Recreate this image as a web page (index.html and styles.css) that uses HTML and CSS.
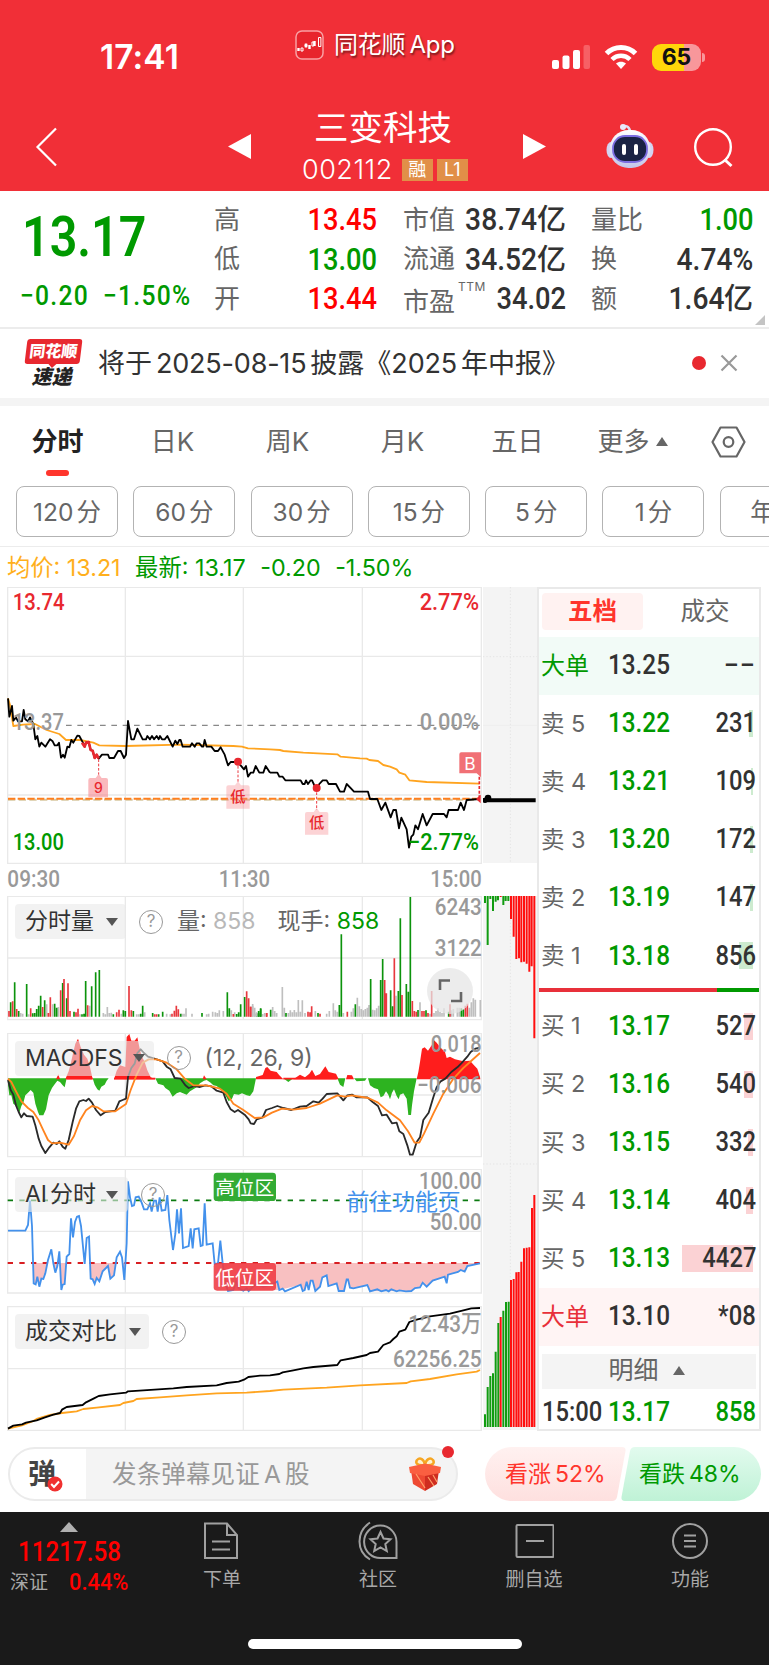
FILE: index.html
```html
<!DOCTYPE html>
<html lang="zh-CN">
<head>
    <meta charset="UTF-8">
    <meta name="viewport" content="width=device-width, initial-scale=1.0">
    <title>三变科技 002112</title>
    <link rel="stylesheet" href="styles.css">
</head>
<body>
    <header>
        <div class="status">
            <span class="clock">17:41</span>
            <div class="app-name">
                <svg width="29" height="30" viewBox="0 0 29 30">
                    <rect x="1" y="1" width="27" height="28" rx="6" fill="#e8242c" stroke="#f9a0a3" stroke-width="1.5"/>
                    <path d="M3.5 18v3M11 13.500v4M14.500 15v4M19.500 11v5" stroke="#fff" stroke-width="2.400"/>
                    <path d="M6 18h2v3H6zM10 14.500h2v2h-2zM17 12h1.800v4H17zM23.500 7.500h2.400v9h-2.400z" fill="none" stroke="#fff" stroke-width="1"/>
                </svg>
                <span>同花顺<i></i>App</span>
            </div>
            <div class="status-icons">
                <svg class="signal" width="40" height="26" viewBox="0 0 40 26">
                    <rect x="1" y="16" width="7" height="9" rx="2" fill="#fff"/>
                    <rect x="11.500" y="11.500" width="7" height="13.500" rx="2" fill="#fff"/>
                    <rect x="22" y="6" width="7" height="19" rx="2" fill="#fff"/>
                    <rect x="32.500" y="1" width="6.500" height="24" rx="2" fill="#f76065"/>
                </svg>
                <svg class="wifi" width="34" height="26" viewBox="0 0 34 26">
                    <path d="M2.500 9.500C10.500 1.500 23.500 1.500 31.500 9.500" fill="none" stroke="#fff" stroke-width="5"/>
                    <path d="M8 15.500c5-5 13-5 18 0" fill="none" stroke="#fff" stroke-width="4.500"/>
                    <path d="M17 25l-5-5.500c2.800-2.500 7.200-2.500 10 0z" fill="#fff"/>
                </svg>
                <div class="battery"><span>65</span></div>
            </div>
        </div>
        <div class="titlebar">
            <svg class="back" width="24" height="42" viewBox="0 0 24 42"><path d="M21 2.500L2.500 21 21 39.500" fill="none" stroke="#fff" stroke-width="2.200"/></svg>
            <svg class="prev" width="23" height="25" viewBox="0 0 23 25"><path d="M23 0v25L0 12.500z" fill="#fff"/></svg>
            <div class="stock">
                <h1>三变科技</h1>
                <p>002112 <b>融</b><b>L1</b></p>
            </div>
            <svg class="next" width="23" height="25" viewBox="0 0 23 25"><path d="M0 0v25l23-12.500z" fill="#fff"/></svg>
            <svg class="robot" width="48" height="46" viewBox="0 0 48 46">
                <defs>
                    <linearGradient id="shell" x1="0" y1="0" x2="0" y2="1"><stop offset="0" stop-color="#fff"/><stop offset="1" stop-color="#c3c5ea"/></linearGradient>
                </defs>
                <path d="M16 4c3-2 7-1 8 4" fill="none" stroke="#dfe0f5" stroke-width="2.500"/>
                <circle cx="17" cy="4" r="3" fill="#e9e9fa"/>
                <ellipse cx="5" cy="27" rx="4.500" ry="8" fill="#d3d4f1"/>
                <ellipse cx="43" cy="27" rx="4.500" ry="8" fill="#d3d4f1"/>
                <rect x="3.500" y="7" width="41" height="38" rx="19" fill="url(#shell)"/>
                <rect x="7" y="13" width="34" height="26" rx="12" fill="#1a2344" stroke="#7c6de0" stroke-width="1.800"/>
                <rect x="16" y="21" width="4" height="11" rx="2" fill="#fff"/>
                <rect x="28" y="21" width="4" height="11" rx="2" fill="#fff"/>
            </svg>
            <svg class="search" width="42" height="42" viewBox="0 0 42 42"><circle cx="20" cy="20" r="17.800" fill="none" stroke="#fff" stroke-width="2.400"/><path d="M31.500 32.500l7 6.500" stroke="#fff" stroke-width="3"/></svg>
        </div>
    </header>

    <section class="quote">
        <div class="last">
            <div class="price"><span class="din">13.17</span></div>
            <div class="change"><span class="din">−0.20</span><span class="din">−1.50%</span></div>
        </div>
        <dl class="q1">
            <div><dt>高</dt><dd class="din red">13.45</dd></div>
            <div><dt>低</dt><dd class="din green">13.00</dd></div>
            <div><dt>开</dt><dd class="din red">13.44</dd></div>
        </dl>
        <dl class="q2">
            <div><dt>市值</dt><dd><span class="din">38.74</span>亿</dd></div>
            <div><dt>流通</dt><dd><span class="din">34.52</span>亿</dd></div>
            <div><dt class="pe">市盈<sup>TTM</sup></dt><dd class="din">34.02</dd></div>
        </dl>
        <dl class="q3">
            <div><dt>量比</dt><dd class="din green">1.00</dd></div>
            <div><dt>换</dt><dd class="din">4.74%</dd></div>
            <div><dt>额</dt><dd><span class="din">1.64</span>亿</dd></div>
        </dl>
        <i class="corner"></i>
    </section>

    <section class="news">
        <div class="news-logo"><b>同花顺</b><em>速递</em></div>
        <p>将于<span>2025-08-15</span>披露《<span class="year">2025</span>年中报》</p>
        <i class="dot"></i>
        <svg class="close" width="18" height="18" viewBox="0 0 18 18"><path d="M1.500 1.500l15 15M16.500 1.500l-15 15" stroke="#999" stroke-width="2.200"/></svg>
    </section>

    <nav class="tabs">
        <a class="active">分时</a>
        <a>日K</a>
        <a>周K</a>
        <a>月K</a>
        <a>五日</a>
        <a>更多<i class="up"></i></a>
        <svg width="35" height="32" viewBox="0 0 35 32"><path d="M9.500 1.500h16L33.500 16l-8 14.500h-16L1.500 16z" fill="none" stroke="#666" stroke-width="2.200" stroke-linejoin="round"/><circle cx="17.500" cy="16" r="4.800" fill="none" stroke="#666" stroke-width="2.200"/></svg>
    </nav>
    <div class="periods">
        <a>120<i></i>分</a>
        <a>60<i></i>分</a>
        <a>30<i></i>分</a>
        <a>15<i></i>分</a>
        <a>5<i></i>分</a>
        <a>1<i></i>分</a>
        <a>年K</a>
    </div>

    <div class="legend"><span class="avg">均价: 13.21</span><span>最新: 13.17</span><span>-0.20</span><span>-1.50%</span></div>

    <main>
        <div class="charts">
            <!-- charts are drawn at 3 units per pixel -->
            <svg class="price-chart" width="476" height="278" viewBox="21 21 1428 834">
                <path class="grid" d="M23 22H1444V850H23ZM376 22V850M730 22V850M1087 22V850M23 229H1444M23 645H1444"/>
                <path d="M198 436H1444" stroke="#888" stroke-width="4" stroke-dasharray="17 17"/>
                <path d="M24 659H1440" stroke="#d8c7a0" stroke-width="6" stroke-dasharray="22 10"/>
                <path d="M24 656H1440" stroke="#fe7f1e" stroke-width="6" stroke-dasharray="22 7"/>
                <path class="line avg-line" d="M24 355L30 375 40 438 70 434 105 432 140 450 178 462 198 480 240 480 280 488 298 496 376 498 540 494 700 498 726 500 744 505 810 508 840 510 850 513 910 518 1012 523 1022 530 1080 535 1100 536 1108 540 1134 543 1150 555 1170 560 1190 568 1198 578 1216 584 1228 601 1280 606 1438 611"/>
                <polyline class="line" points="24,355 28,410 36,378 40,422 48,412 54,424 66,424 71,390 76,418 84,424 90,412 100,432 106,478 112,468 118,500 124,488 136,500 150,478 158,484 164,496 172,496 177,488 183,533 189,524 194,533 202,500 208,502 214,480 220,488 232,467 238,468 250,490 254,500 258,488 266,486 272,510 278,512 284,534 290,524 296,536 306,524 324,524 328,534 342,534 354,513 362,513 372,534 378,524 384,423 394,478 402,478 412,446 428,478 438,478 442,468 450,478 456,468 462,478 470,468 476,478 480,468 486,478 494,478 502,468 518,500 526,482 532,492 538,480 542,480 548,500 570,500 576,490 584,500 590,490 598,490 606,500 610,500 614,480 620,500 634,500 644,513 654,513 662,502 674,524 684,556 692,546 710,546 722,556 732,568 738,558 744,590 752,578 760,578 767,558 778,578 790,578 797,558 810,578"/>
                <polyline class="line red-line" points="246,488 254,500 258,488 266,486 272,510 278,512 284,534 290,524 296,536"/>
                <polyline class="line" transform="translate(750 0)" points="60,578 82,578 88,590 98,590 106,601 152,601 158,612 164,612 168,601 174,612 182,601 186,601 194,618 200,624 208,612 218,601 230,601 236,612 258,612 270,635 282,635 290,612 300,622 312,635 354,635 360,657 382,657 394,690 406,668 422,712 430,690 438,690 447,745 454,713 470,748 477,803 484,770 490,764 496,736 504,748 518,702 530,736 548,702 582,702 590,712 596,690 624,690 632,668 642,690 650,660 688,657"/>
                <path d="M296 538V584M714 545V610M950 624V690" stroke="#eb3a40" stroke-width="3" stroke-dasharray="8 5"/>
                <path d="M1438 590V657" stroke="#e8282f" stroke-width="5" stroke-dasharray="9 5"/>
                <circle cx="714" cy="545" r="12" fill="#e8282f"/>
                <circle cx="950" cy="624" r="12" fill="#e8282f"/>
                <path d="M1442 644V670L1428 657Z" fill="#e8282f"/>
                <path class="tag" d="M265 600a6 6 0 0 1 6-6H287L296 582 305 594H318a6 6 0 0 1 6 6V652H265Z"/>
                <path class="tag pale" d="M679 622a6 6 0 0 1 6-6H705L714 604 723 616H743a6 6 0 0 1 6 6V686H679Z"/>
                <path class="tag pale" d="M915 702a6 6 0 0 1 6-6H941L950 684 959 696H979a6 6 0 0 1 6 6V764H915Z"/>
                <path d="M1384 517H1443V592L1430 580H1378V523a6 6 0 0 1 6-6Z" fill="#f17075"/>
                <text class="tag-text" x="295" y="638" font-size="42">9</text>
                <text class="tag-text" x="714" y="665" font-size="46">低</text>
                <text class="tag-text" x="950" y="743" font-size="46">低</text>
                <text class="tag-b" x="1410" y="569">B</text>
                <text class="axis t-red" x="38" y="90" textLength="156" lengthAdjust="spacingAndGlyphs">13.74</text>
                <text class="axis" x="38" y="449" textLength="154" lengthAdjust="spacingAndGlyphs">13.37</text>
                <text class="axis t-green" x="38" y="810" textLength="154" lengthAdjust="spacingAndGlyphs">13.00</text>
                <text class="axis end t-red" x="1437" y="90" textLength="178" lengthAdjust="spacingAndGlyphs">2.77%</text>
                <text class="axis end" x="1437" y="449" textLength="178" lengthAdjust="spacingAndGlyphs">0.00%</text>
                <text class="axis end t-green" x="1437" y="810" textLength="213" lengthAdjust="spacingAndGlyphs">−2.77%</text>
            </svg>
            <svg width="476" height="31" viewBox="21 855 1428 93">
                <text class="axis" x="22" y="921" textLength="158" lengthAdjust="spacingAndGlyphs">09:30</text>
                <text class="axis mid" x="733" y="921" textLength="154" lengthAdjust="spacingAndGlyphs">11:30</text>
                <text class="axis end" x="1445" y="921" textLength="154" lengthAdjust="spacingAndGlyphs">15:00</text>
            </svg>

            <div class="panel">
                <svg width="476" height="126" viewBox="21 33 1428 378">
                    <path class="grid" d="M23 34H1444V404H23ZM376 34V404M730 34V404M1087 34V404M23 219H1444"/>
                    <path class="bars grey" d="M62 395V384M68 395V386M86 395V388M140 395V358M158 395V358M175 395V366M240 395V388M269 395V362M310 395V384M316 395V388M322 395V366M328 395V384M334 395V383M364 395V386M410 395V388M416 395V388M434 395V382M500 395V386M511 395V388M546 395V386M552 395V386M558 395V370M576 395V386M620 395V388M626 395V386M638 395V380M646 395V382M652 395V384M658 395V376M670 395V378M694 395V376M704 395V382M758 395V357M764 395V386M788 395V387"/>
                    <path class="bars green-bars" d="M32 395V352M44 395V292M56 395V378M80 395V297M98 395V385M104 395V384M110 395V372M116 395V362M122 395V332M134 395V346M164 395V356M170 395V368M188 395V294M200 395V340M222 395V380M246 395V388M252 395V386M257 395V288M275 395V304M287 395V262M298 395V255M340 395V388M370 395V376M376 395V378M400 395V378M422 395V386M428 395V362M458 395V384M476 395V388M488 395V380M542 395V386M606 395V384M682 395V322M688 395V370M710 395V387M716 395V382M722 395V358M734 395V336M770 395V385M776 395V378M782 395V371"/>
                    <path class="bars red-bars" d="M27 395V378M38 395V349M50 395V372M92 395V370M128 395V366M145 395V384M151 395V337M182 395V316M192 395V282M204 395V295M210 395V378M228 395V382M234 395V371M263 395V361M350 395V382M357 395V374M387 395V303M394 395V376M464 395V388M470 395V388M516 395V386M523 395V377M529 395V362M535 395V373M700 395V387M740 395V319M746 395V340M752 395V365M800 395V384"/>
                    <g transform="translate(750 0)">
                        <path class="bars grey" d="M8 395V362M14 395V368M20 395V382M44 395V384M68 395V366M74 395V378M80 395V384M97 395V306M103 395V368M115 395V384M121 395V376M127 395V382M133 395V375M139 395V382M145 395V345M151 395V380M157 395V346M165 395V384M196 395V378M230 395V386M238 395V378M250 395V355M256 395V376M262 395V380M280 395V384M304 395V380M310 395V370M322 395V338M328 395V364M334 395V372M340 395V376M346 395V372M352 395V368M357 395V360M368 395V374M374 395V376M380 395V370M386 395V362M438 395V332M510 395V352M540 395V386M552 395V384M558 395V378M564 395V370M570 395V380M576 395V384M582 395V370M604 395V376M610 395V372M622 395V368M628 395V368M658 395V368M664 395V352M670 395V340M676 395V344M691 395V345"/>
                        <path class="bars green-bars" d="M26 395V385M32 395V370M62 395V374M108 395V384M204 395V384M268 395V360M274 395V148M316 395V358M362 395V282M392 395V285M398 395V222M422 395V316M428 395V364M445 395V318M451 395V100M469 395V297M475 395V320M481 395V36M504 395V375M528 395V376M596 395V380M634 395V370M640 395V373"/>
                        <path class="bars red-bars" d="M2 395V365M50 395V384M174 395V380M180 395V382M185 395V364M210 395V386M292 395V380M404 395V285M409 395V325M433 395V220M456 395V330M487 395V348M493 395V378M499 395V380M516 395V378M522 395V378M534 395V384M545 395V318M600 395V358M646 395V362M652 395V356"/>
                    </g>
                    <text class="axis end" x="1445" y="90" textLength="141" lengthAdjust="spacingAndGlyphs">6243</text>
                    <text class="axis end" x="1445" y="214" textLength="141" lengthAdjust="spacingAndGlyphs">3122</text>
                </svg>
                <div class="tools"><span class="pick">分时量<i></i></span><i class="help">?</i><span class="info">量:&nbsp;<s>858</s></span><span class="info now">现手:&nbsp;<u>858</u></span></div>
                <div class="expand"><svg width="46" height="46" viewBox="0 0 46 46"><path d="M13 22V12.500H23M34 24V33H24" fill="none" stroke="#666" stroke-width="2.600"/></svg></div>
            </div>

            <div class="panel">
                <svg width="476" height="126" viewBox="21 443 1428 378">
                    <path class="grid" d="M23 444H1444V814H23ZM376 444V814M730 444V814M1087 444V814M23 629H1444"/>
                    <path fill="#2db320" d="M24 579V600L28 630H34L40 655 46 660 52 665 58 682 64 662 70 652 76 630 84 622 92 614 100 622 106 655 114 680 118 690H130L138 672 146 630 156 608 164 597 172 586 180 590 188 600 194 606 200 579ZM278 579L284 598 292 612 298 616 304 604 314 598 320 586 326 579ZM466 579L474 595 490 600 496 608 508 616 518 634 530 624 540 620 560 628 570 618 590 606 600 594 612 586 620 584 632 592 640 600 650 602 664 614 676 630 686 648 696 640 702 626 716 628 726 624 740 630 750 632 760 618 768 579ZM850 579L865 590 880 579ZM1012 579L1020 598 1030 605 1036 579ZM1062 579L1070 588 1095 586 1100 579ZM1104 579L1110 600 1122 608 1134 612 1142 636 1150 632 1158 618 1165 628 1170 642 1176 622 1182 612 1190 632 1196 642 1200 628 1210 624 1220 640 1225 689H1233L1236 660 1242 618 1250 579Z"/>
                    <path fill="#ff1d1c" d="M168 582L175 567 180 582ZM196 582L206 558 212 535 220 500 226 475 234 460 242 485 252 508 262 520 270 545 278 582ZM342 582L350 556 360 540 376 545 380 455 388 446 394 466 404 466 412 456 418 485 424 510 434 530 442 555 452 576 466 582ZM608 582L612 570 620 582ZM768 582V575L788 569 796 548 802 545 812 556 830 560 838 570 850 582ZM880 582L900 568 915 576 928 565 936 553 946 572 960 566 976 543 986 560 1008 565 1016 582ZM1038 582L1042 569 1056 570 1062 582ZM1250 582L1255 560 1260 530 1266 490 1274 486 1284 496 1295 480 1302 465 1310 472 1320 485 1335 500 1340 518 1350 514 1365 522 1390 528 1410 526 1422 540 1432 550 1440 575 1441 582Z"/>
                    <path d="M200 580H278M342 580H466M850 580H1010" stroke="#ff1d1c" stroke-width="5"/>
                    <path class="line dark" d="M24 584L32 614 40 628 48 660 56 680 64 696 72 684 80 692 98 694 106 720 116 760 124 782 136 803 148 786 160 772 170 776 178 768 188 784 196 790 206 764 218 710 228 670 238 648 250 644 258 647 266 640 276 652 288 674 302 690 316 680 346 676 358 648 368 644 378 640 384 575 394 548 404 535 412 503 422 492 432 503 444 514 470 522 488 528 500 544 512 552 524 578 542 580 556 600 566 608 584 602 600 605 616 600 634 603 650 616 670 622 680 650 692 672 704 680 714 674 734 688 746 702 752 714 762 716 770 702 788 696 798 674 816 668 832 662 850 668 874 674 900 664 920 662 940 648 956 652 968 640 980 626 1012 624 1030 645 1042 630 1056 628 1070 636 1102 636 1118 650 1134 662 1146 690 1160 688 1176 714 1190 712 1198 738 1210 746 1222 780 1230 808 1238 808 1250 770 1260 756 1270 704 1286 682 1300 636 1310 606 1322 588 1336 580 1354 560 1372 546 1384 534 1402 514 1412 500 1426 490 1440 487"/>
                    <path class="line orange-line" d="M24 580L34 590 46 614 64 648 84 668 100 680 116 705 130 735 144 764 156 774 180 772 206 778 222 752 240 705 258 675 276 662 292 666 310 678 346 678 378 656 392 614 410 568 428 532 446 522 470 522 500 532 530 552 556 582 580 600 620 600 660 610 680 625 700 655 730 674 764 698 790 696 816 682 846 670 880 673 920 668 960 655 1012 630 1035 634 1055 630 1105 638 1134 652 1160 675 1200 705 1224 738 1244 772 1258 772 1272 745 1300 685 1330 625 1360 580 1390 548 1440 503"/>
                    <text class="axis end" x="1445" y="500" textLength="153" lengthAdjust="spacingAndGlyphs">0.018</text>
                    <text class="axis end" x="1445" y="623" textLength="194" lengthAdjust="spacingAndGlyphs">−0.006</text>
                </svg>
                <div class="tools"><span class="pick en">MACDFS<i></i></span><i class="help">?</i><span class="info">(12, 26, 9)</span></div>
            </div>

            <div class="panel">
                <svg width="476" height="126" viewBox="21 27 1428 378">
                    <defs>
                        <clipPath id="low"><rect x="20" y="309" width="1424" height="88"/></clipPath>
                        <path id="ai" d="M24 212L76 212 84 195 90 122 96 198 101 370 107 373 112 350 118 380 124 356 130 357 136 340 144 300 154 268 160 310 166 338 172 318 178 274 184 390 188 374 194 372 200 290 208 282 213 175 219 232 225 186 231 170 237 168 243 198 254 312 260 234 267 230 272 356 278 358 284 372 290 354 298 364 308 334 324 318 331 356 342 346 350 292 360 275 366 292 373 360 380 250 384 64 390 112 396 138 402 136 407 112 416 110 425 128 432 148 442 148 450 130 455 155 462 122 468 122 473 155 479 112 485 152 496 150 502 105 508 180 519 270 526 222 531 148 537 220 543 145 549 264 566 258 572 205 578 265 583 208 596 205 602 258 608 256 614 130 620 254 638 250 644 312 654 310 661 242 668 310 676 370 684 393 700 390 708 365 716 385 730 392 740 385 746 393 770 370 790 380 810 375 832 365 838 390 848 386 855 394 902 374 908 393 914 390 920 365 926 390 932 362 938 362 946 393 960 380 967 352 980 346 985 378 1010 370 1016 393 1032 393 1040 358 1044 358 1050 383 1060 385 1102 375 1110 394 1132 388 1144 394 1158 390 1166 394 1174 388 1190 394 1198 391 1218 394 1234 393 1245 384 1260 382 1268 368 1280 380 1298 362 1334 350 1340 370 1344 344 1374 336 1382 330 1394 335 1402 318 1440 310"/>
                    </defs>
                    <path class="grid" d="M23 28H1444V399H23ZM376 28V399M730 28V399M1087 28V399M23 214H1444"/>
                    <g clip-path="url(#low)"><path fill="#f8c0c1" d="M24 212L76 212 84 195 90 122 96 198 101 370 107 373 112 350 118 380 124 356 130 357 136 340 144 300 154 268 160 310 166 338 172 318 178 274 184 390 188 374 194 372 200 290 208 282 213 175 243 198 254 312 260 234 267 230 272 356 278 358 284 372 290 354 298 364 308 334 324 318 331 356 342 346 350 292 360 275 366 292 373 360 380 250 384 64 638 250 644 312 654 310 661 242 668 310 676 370 684 393 838 390 902 374 908 393 914 390 920 365 926 390 932 362 938 362 946 393 960 380 967 352 980 346 985 378 1010 370 1016 393 1032 393 1040 358 1044 358 1050 383 1060 385 1102 375 1110 394 1234 393 1245 384 1260 382 1268 368 1280 380 1298 362 1334 350 1340 370 1344 344 1374 336 1382 330 1394 335 1402 318 1440 310Z"/></g>
                    <path d="M23 121H1444" stroke="#0b7a10" stroke-width="5" stroke-dasharray="16 19"/>
                    <path d="M23 309H1444" stroke="#d81e22" stroke-width="6" stroke-dasharray="16 19"/>
                    <use href="#ai" fill="none" stroke="#4391ec" stroke-width="5.500"/>
                    <rect x="641" y="38" width="187" height="85" rx="10" fill="#33ab34"/>
                    <rect x="641" y="309" width="187" height="83" rx="10" fill="#ef3e46" fill-opacity=".9"/>
                    <text class="zone" x="734" y="104">高位区</text>
                    <text class="zone" x="734" y="374">低位区</text>
                    <text class="axis end" x="1445" y="86" textLength="188" lengthAdjust="spacingAndGlyphs">100.00</text>
                    <text class="axis end" x="1445" y="210" textLength="156" lengthAdjust="spacingAndGlyphs">50.00</text>
                    <text class="golink" x="1040" y="149" textLength="342">前往功能页</text>
                </svg>
                <div class="tools"><span class="pick ai">AI<em></em>分时<i></i></span><i class="help">?</i></div>
            </div>

            <div class="panel">
                <svg width="476" height="126" viewBox="21 437 1428 378">
                    <path class="grid" d="M23 439H1444V810H23ZM376 439V810M730 439V810M1087 439V810M23 625H1444"/>
                    <path class="line avg-line" d="M24 805L66 795 100 782 110 776 150 764 186 758 230 753 250 746 290 742 360 734 370 728 400 722 410 716 480 711 560 705 650 699 740 697 810 692 850 688 980 682 1080 675 1220 668 1232 663 1290 656 1370 642 1430 634 1440 629"/>
                    <path class="line" d="M24 805L40 796 66 792 78 787 110 780 135 771 160 763 180 758 186 748 200 740 248 734 258 726 270 720 282 714 296 707 330 702 378 697 384 693 430 690 520 684 560 680 650 675 680 668 716 664 732 658 745 650 780 646 810 645 838 641 848 636 880 630 910 624 940 620 1012 614 1022 600 1060 593 1100 584 1110 578 1134 574 1150 554 1170 546 1180 536 1190 528 1198 514 1216 508 1228 485 1250 478 1290 468 1350 460 1390 450 1414 444 1440 443"/>
                    <text class="axis end" x="1445" y="515" textLength="220" lengthAdjust="spacingAndGlyphs">12.43万</text>
                    <text class="axis end" x="1445" y="620" textLength="266" lengthAdjust="spacingAndGlyphs">62256.25</text>
                </svg>
                <div class="tools"><span class="pick">成交对比<i></i></span><i class="help">?</i></div>
            </div>
        </div>

        <div class="side">
            <svg width="54" height="276" viewBox="699 22 162 828">
                <path class="dots" d="M781 22V850M699 231H861"/>
                <path d="M699 437H861" stroke="#eee" stroke-width="3"/>
                <path d="M700 662H857" stroke="#000" stroke-width="12"/>
                <circle cx="705" cy="662" r="8"/><circle cx="714" cy="655" r="10"/>
            </svg>
            <svg width="54" height="534" viewBox="699 33 162 1602">
                <path class="dots" d="M781 33V1635M699 837H861"/>
                <path class="steps s-green" d="M705 33V54M713 33V180M721 33V42M729 33V78M737 33V50M744 33V46M760 33V60M767 33V48M775 33V48"/>
                <path class="steps s-red" d="M752 33V36M783 33V102M791 33V155M799 33V222M807 33V220M814 33V232M822 33V230M830 33V236M838 33V260M845 33V244M853 33V460"/>
                <g transform="translate(0 825)">
                    <path class="steps s-green" d="M705 801V763M713 801V681M721 801V648M729 801V640M737 801V575M745 801V489M760 801V452M768 801V426M776 801V425"/>
                    <path class="steps s-red" d="M752 801V471M783 801V360M791 801V357M799 801V337M806 801V336M814 801V305M822 801V265M830 801V263M838 801V262M846 801V144M853 801V105"/>
                </g>
            </svg>
        </div>

        <div class="book">
            <div class="book-tabs"><b>五档</b><span>成交</span></div>
            <div class="row big-sell"><span class="green">大单</span><span class="din">13.25</span><span class="din none">−−</span></div>
            <div class="row sell"><span>卖 5</span><span class="din">13.22</span><span class="din">231</span><i style="width:4px"></i></div>
            <div class="row sell"><span>卖 4</span><span class="din">13.21</span><span class="din">109</span><i style="width:2px"></i></div>
            <div class="row sell"><span>卖 3</span><span class="din">13.20</span><span class="din">172</span><i style="width:3px"></i></div>
            <div class="row sell"><span>卖 2</span><span class="din">13.19</span><span class="din">147</span><i style="width:3px"></i></div>
            <div class="row sell"><span>卖 1</span><span class="din">13.18</span><span class="din">856</span><i style="width:14px"></i></div>
            <div class="ratio"></div>
            <div class="row buy"><span>买 1</span><span class="din">13.17</span><span class="din">527</span><i style="width:9px"></i></div>
            <div class="row buy"><span>买 2</span><span class="din">13.16</span><span class="din">540</span><i style="width:9px"></i></div>
            <div class="row buy"><span>买 3</span><span class="din">13.15</span><span class="din">332</span><i style="width:5px"></i></div>
            <div class="row buy"><span>买 4</span><span class="din">13.14</span><span class="din">404</span><i style="width:7px"></i></div>
            <div class="row buy"><span>买 5</span><span class="din">13.13</span><span class="din">4427</span><i style="width:71px"></i></div>
            <div class="row big-buy"><span class="brand">大单</span><span class="din">13.10</span><span class="din">*08</span></div>
            <div class="detail">明细<i class="up"></i></div>
            <div class="row tick"><span class="din">15:00</span><span class="din">13.17</span><span class="din green">858</span></div>
        </div>
    </main>

    <div class="comment">
        <div class="input">
            <div class="dan">弹<svg width="16" height="16" viewBox="0 0 16 16"><circle cx="8" cy="8" r="7.500" fill="#f0302f"/><path d="M4.200 8l2.800 3 5-5.500" fill="none" stroke="#fff" stroke-width="2"/></svg></div>
            <span>发条弹幕见证<i></i>A<i></i>股</span>
            <svg class="gift" width="34" height="36" viewBox="0 0 34 36">
                <path d="M17 9C9 10 7 7 9 4c3-3 7-1 8 5 1-6 5-8 8-5 2 3 0 6-8 5z" fill="#fff2cf" stroke="#f6a623" stroke-width="2.400"/>
                <path d="M3 14l14 4v17L5 28z" fill="#ee4a33"/>
                <path d="M31 14l-14 4v17L29 28z" fill="#cf2d20"/>
                <path d="M1 11l16-3.500L33 11l-1 6-15 3-15-3z" fill="#fa5f41"/>
                <path d="M8 18l9 14M20 21l6 9M25 19l4 7" stroke="#ffa06a" stroke-width="1.200"/>
            </svg>
            <i class="dot"></i>
        </div>
        <div class="vote">
            <svg width="276" height="54" viewBox="0 0 276 54">
                <defs>
                    <linearGradient id="up" x1="0" y1="0" x2="0" y2="1"><stop offset="0" stop-color="#fff1f0"/><stop offset="1" stop-color="#fee0df"/></linearGradient>
                    <linearGradient id="down" x1="0" y1="0" x2="0" y2="1"><stop offset="0" stop-color="#e2fbee"/><stop offset="1" stop-color="#bff2d6"/></linearGradient>
                </defs>
                <path d="M27 0H137q4 0 3.500 4L132 50q-1 4-5 4H27a27 27 0 0 1 0-54z" fill="url(#up)"/>
                <path d="M150 0H249a27 27 0 0 1 0 54H140q-4 0-3.500-4L145 4q1-4 5-4z" fill="url(#down)"/>
            </svg>
            <span class="bull">看涨<i></i>52%</span>
            <span class="bear">看跌<i></i>48%</span>
        </div>
    </div>

    <footer>
        <div class="menu">
            <div class="index">
                <i class="up"></i>
                <strong><span class="din">11217.58</span></strong>
                <p>深证<span class="din">0.44%</span></p>
            </div>
            <a>
                <svg width="40" height="40" viewBox="0 0 40 40"><path d="M3 2.500H25L35 14V37H3ZM25 2.500V14H35M10 20.500H28M10 28.500H28"/></svg>
                下单
            </a>
            <a>
                <svg width="40" height="40" viewBox="0 0 40 40"><path d="M38.500 37H23A16.200 16.200 0 1 1 38.500 21ZM12 1.500C-2 11-2 30 12 38.500M22.500 11l3 6.500 7 .8-5.200 4.700 1.500 7-6.300-3.500-6.300 3.500 1.500-7-5.200-4.700 7-.8z"/></svg>
                社区
            </a>
            <a>
                <svg width="40" height="40" viewBox="0 0 40 40"><rect x="2.500" y="4" width="37" height="32" rx="1"/><path d="M12 20H30"/></svg>
                删自选
            </a>
            <a>
                <svg width="40" height="40" viewBox="0 0 40 40"><circle cx="20" cy="20" r="17"/><path d="M14 14.500H26M14 20H26M14 25.500H26"/></svg>
                功能
            </a>
        </div>
        <div class="home"></div>
    </footer>
</body>
</html>
```
FILE: styles.css
```css
:root {
    --brand: #f12f37;
    --red: #ff0000;
    --green: #009900;
    --text: #323232;
    --grey: #666;
    --line: #ececec;
}

* {
    margin: 0;
    padding: 0;
    box-sizing: border-box;
}

body {
    width: 769px;
    height: 1665px;
    overflow: hidden;
    background: #fff;
    color: var(--text);
    font-family: Inter, "Noto Sans CJK SC", sans-serif;
    font-size: 26px;
    line-height: 1;
}

svg {
    display: block;
}

i {
    font-style: normal;
}

.din {
    display: inline-block;
    font-family: Roboto, "Noto Sans CJK SC", sans-serif;
    font-weight: 500;
    transform: scaleX(0.88);
    transform-origin: right center;
}

.red { color: var(--red); }
.green { color: var(--green); }
.brand { color: #e8303a; }

/* Header */
header {
    height: 191px;
    background: var(--brand);
    color: #fff;
}

.status {
    display: flex;
    height: 100px;
}

.clock {
    width: 195px;
    margin: 41px 0 0 100px;
    font-size: 33.500px;
    font-weight: 600;
    letter-spacing: 0.1px;
}

.app-name {
    display: flex;
    width: 256px;
    height: 30px;
    margin-top: 30px;
    align-items: center;
    gap: 10px;
    font-size: 24px;
    letter-spacing: -0.2px;
    text-shadow: 1px 2px 2px rgba(0, 0, 0, 0.5);
}

.app-name i {
    margin-left: 4px;
}

.status-icons {
    display: flex;
    height: 28px;
    margin-top: 44px;
}

.wifi {
    margin-left: 13px;
}

.battery {
    position: relative;
    width: 49px;
    height: 27px;
    margin-left: 14px;
    border-radius: 9px;
    background: linear-gradient(90deg, #ffd60a 65%, #f8979b 65%);
    color: #111;
    font-size: 23px;
    font-weight: 700;
    line-height: 27px;
    text-align: center;
}

.battery::after {
    content: "";
    position: absolute;
    right: -4px;
    top: 9px;
    width: 3px;
    height: 9px;
    border-radius: 0 3px 3px 0;
    background: #f8979b;
}

.titlebar {
    display: flex;
    height: 91px;
}

.back { margin: 26px 0 0 35px; }
.prev { margin: 34px 0 0 169px; }
.next { margin: 34px 0 0 39px; }
.robot { margin: 23px 0 0 60px; }
.search { margin: 27px 0 0 39px; }

.stock {
    width: 195px;
    margin-left: 38px;
}

.stock h1 {
    margin: 10px 0 0 25px;
    font-size: 34.500px;
    font-weight: 400;
    line-height: 36px;
    white-space: nowrap;
}

.stock p {
    display: flex;
    margin: 11px 0 0 13px;
    font-size: 27px;
    font-weight: 300;
    line-height: 26px;
    letter-spacing: 0.5px;
    white-space: nowrap;
}

.stock b {
    width: 31px;
    height: 22px;
    margin: 2px 0 0 9px;
    background: #e18f48;
    font-size: 18px;
    font-weight: 400;
    line-height: 22px;
    letter-spacing: 0;
    text-align: center;
}

.stock b + b {
    margin-left: 4px;
}

/* Quote */
.quote {
    position: relative;
    display: flex;
    height: 138px;
    border-bottom: 2px solid var(--line);
}

.last {
    width: 214px;
    color: var(--green);
}

.last .din {
    transform-origin: left center;
}

.price {
    height: 54px;
    margin: 18px 0 0 22px;
    font-size: 55px;
    line-height: 54px;
}

.price .din {
    font-weight: 600;
}

.change {
    display: flex;
    margin: 19px 0 0 20px;
    font-size: 28px;
    letter-spacing: 1.400px;
}

.change .din {
    width: 83px;
    white-space: nowrap;
}

.quote dl {
    padding-top: 9px;
    font-size: 26px;
}

.quote dl div {
    display: flex;
    height: 39.500px;
    align-items: center;
    justify-content: space-between;
    white-space: nowrap;
}

.quote dt {
    color: var(--grey);
}

.quote dd {
    font-size: 31px;
}

.quote dd:not(.din) {
    font-size: 29px;
    font-weight: 500;
}

.quote dd .din {
    font-size: 31px;
}

.q2 .din,
.q3 .din {
    transform: scaleX(0.91);
}

.q2 dd.din,
.q3 dd.green {
    transform: scaleX(0.88);
}

.q1 { width: 163px; }
.q2 { width: 163px; margin-left: 26px; }
.q3 { width: 162px; margin-left: 25px; }

.pe {
    position: relative;
    top: 3px;
}

.pe sup {
    position: absolute;
    left: 55px;
    top: -8px;
    font-size: 12px;
    letter-spacing: 0.5px;
}

.corner {
    position: absolute;
    right: 4px;
    bottom: 2px;
    border: 5px solid transparent;
    border-right-color: #c4c4c4;
    border-bottom-color: #c4c4c4;
}

/* News */
.news {
    display: flex;
    height: 77px;
    align-items: center;
    padding-bottom: 8px;
    border-bottom: 8px solid #f4f4f4;
}

.news-logo {
    position: relative;
    width: 55px;
    height: 48px;
    margin: 7px 17px 0 26px;
    text-align: center;
}

.news-logo b {
    display: block;
    height: 25px;
    border-radius: 3px;
    background: #e8282f;
    color: #fff;
    font-size: 16px;
    font-weight: 900;
    line-height: 24px;
    transform: skewX(-7deg);
}

.news-logo b::after {
    content: "";
    position: absolute;
    left: 24px;
    top: 25px;
    border: 4px solid transparent;
    border-top-color: #e8282f;
}

.news-logo em {
    display: block;
    margin: 4px 0 0 -4px;
    color: #222;
    font-size: 20px;
    font-weight: 900;
    line-height: 18px;
}

.news p {
    width: 594px;
    margin-top: 7px;
    font-size: 27px;
    white-space: nowrap;
}

.news p span {
    margin: 0 4px;
    letter-spacing: -0.2px;
}

.news p .year {
    margin-left: 0;
}

.dot {
    width: 14px;
    height: 14px;
    border-radius: 50%;
    background: #e8282f;
}

.news .dot {
    margin-top: 7px;
}

.close {
    margin: 7px 0 0 14px;
}

/* Tabs */
.tabs {
    display: flex;
    height: 74px;
    align-items: center;
    padding-bottom: 2px;
    color: var(--grey);
}

.tabs a {
    position: relative;
    width: 115px;
    text-align: center;
}

.tabs .active {
    color: #222;
    font-weight: 700;
}

.tabs .active::after {
    content: "";
    position: absolute;
    left: 46px;
    top: 41px;
    width: 23px;
    height: 6px;
    border-radius: 3px;
    background: #ff352c;
}

.tabs svg {
    margin: 0 0 1px 21px;
}

.up {
    display: inline-block;
    border: 6.500px solid transparent;
    border-top-width: 0;
    border-bottom: 9px solid var(--grey);
}

.tabs .up {
    margin: 0 0 5px 6px;
}

.periods {
    display: flex;
    width: 769px;
    height: 67px;
    gap: 15.300px;
    padding: 6px 0 0 16px;
    border-bottom: 1.500px solid var(--line);
    overflow: hidden;
}

.periods a {
    flex: none;
    width: 102px;
    height: 51px;
    border: 1.500px solid #b3b3b3;
    border-radius: 8px;
    color: var(--grey);
    font-size: 24.500px;
    line-height: 50px;
    text-align: center;
}

.periods i {
    margin-left: 3px;
}

/* Legend */
.legend {
    display: flex;
    height: 40px;
    gap: 14.500px;
    padding: 9px 0 0 7px;
    color: var(--green);
    font-size: 23.300px;
    letter-spacing: 0;
}

.avg {
    color: #ffaf1c;
}

/* Charts */
main {
    display: flex;
    height: 844px;
    padding-left: 7px;
}

.charts {
    width: 476px;
}

.grid {
    fill: none;
    stroke: #e9e9e9;
    stroke-width: 4;
}

.line {
    fill: none;
    stroke: #000;
    stroke-width: 5.500;
    stroke-linejoin: round;
}

.dark { stroke: #2a2a2a; }
.avg-line { stroke: #ffa41f; }
.red-line { stroke: #e8282f; stroke-width: 8; }
.orange-line { stroke: #ff841f; }

.axis {
    fill: #999;
    font-family: Roboto, "Noto Sans CJK SC", sans-serif;
    font-size: 70px;
    font-weight: 500;
}

.end { text-anchor: end; }
.mid { text-anchor: middle; }
.t-red { fill: #e8282f; }
.t-green { fill: var(--green); }

.tag {
    fill: #f58086;
    fill-opacity: 0.55;
}

.pale {
    fill-opacity: 0.35;
}

.tag-text {
    fill: #e8282f;
    font-weight: 500;
    text-anchor: middle;
}

.tag-b {
    fill: #fff;
    font-size: 52px;
    text-anchor: middle;
}

.zone {
    fill: #fff;
    font-size: 59px;
    text-anchor: middle;
}

.golink {
    fill: #4391ec;
    font-size: 68px;
}

.panel {
    position: relative;
    height: 126px;
    margin-bottom: 10.700px;
}

.bars { stroke-width: 5; }
.grey { stroke: #bfbfbf; }
.green-bars { stroke: #0c930c; }
.red-bars { stroke: #e8383e; }

.tools {
    position: absolute;
    left: 8px;
    top: 8px;
    display: flex;
    height: 35px;
    align-items: center;
    color: var(--grey);
    white-space: nowrap;
}

.pick {
    display: flex;
    height: 35px;
    align-items: center;
    padding: 0 8px 0 10px;
    border-radius: 4px;
    background: rgba(233, 233, 233, 0.6);
    color: var(--text);
    font-size: 23px;
}

.pick i {
    margin-left: 12px;
    border: 6px solid transparent;
    border-top: 8px solid #555;
    border-bottom-width: 0;
}

.pick em {
    width: 3px;
}

.pick.en {
    padding-right: 7px;
}

.pick.en i,
.pick.ai i {
    margin: 0 2px 0 10px;
}

.help {
    width: 24px;
    height: 24px;
    margin-left: 13px;
    border: 1.500px solid #999;
    border-radius: 50%;
    color: #999;
    font-size: 17px;
    line-height: 21px;
    text-align: center;
}

.info {
    margin-left: 14px;
    font-size: 23px;
}

.info s {
    color: #b8b8b8;
    text-decoration: none;
}

.info u {
    color: var(--green);
    text-decoration: none;
}

.now {
    margin-left: 22px;
}

.expand {
    position: absolute;
    left: 420px;
    top: 72px;
    border-radius: 50%;
    background: rgba(230, 230, 230, 0.75);
}

/* Side strip */
.side {
    width: 54px;
}

.side svg {
    background: #f4f4f4;
}

.side svg + svg {
    margin-top: 33px;
}

.dots {
    fill: none;
    stroke: #e4e4e4;
    stroke-width: 3;
    stroke-dasharray: 4 6;
}

.steps { stroke-width: 6; }
.s-green { stroke: #119c11; }
.s-red { stroke: #ff0f0f; }

/* Order book */
.book {
    width: 224px;
    height: 844px;
    border: 2px solid #e9e9e9;
}

.book-tabs {
    display: flex;
    height: 47.500px;
    padding: 4px 3px;
    font-size: 24.500px;
    line-height: 36px;
    text-align: center;
}

.book-tabs b {
    width: 101px;
    height: 37px;
    border-radius: 4px;
    background: #fff2f1;
    color: #ff352c;
}

.book-tabs span {
    width: 124px;
    margin-right: -12px;
    color: var(--grey);
}

.row {
    position: relative;
    display: flex;
    height: 58.100px;
    align-items: center;
    padding: 0 3px 0 2px;
    font-size: 23.500px;
}

.row span:first-child:not(.green):not(.brand):not(.din) {
    color: var(--grey);
}

.row > span {
    position: relative;
    z-index: 1;
}

.row span:first-child {
    width: 67px;
}

.big-sell span:first-child,
.big-buy span:first-child {
    font-size: 24px;
}

.row .din {
    font-size: 27px;
}

.row .din:nth-child(2) {
    color: var(--green);
    transform: scaleX(0.9);
    transform-origin: left center;
}

.row .din:nth-child(3) {
    margin-left: auto;
}

.row .none {
    letter-spacing: 1px;
    transform: none;
}

.row i {
    position: absolute;
    right: 6px;
    top: 15.500px;
    height: 27px;
    background: #cdebcf;
}

.row.buy i {
    background: #fbd2d4;
}

.big-sell { background: #f2fbf7; }
.big-buy { background: #fff4f4; }

.big-sell .din:nth-child(2),
.big-buy .din:nth-child(2) {
    color: var(--text);
}

.ratio {
    height: 4px;
    margin: 2.500px 0 5.500px;
    background: linear-gradient(90deg, #e8303a 81%, #009900 81%);
}

.detail {
    height: 35px;
    margin: 8px 3px 0;
    background: #f4f4f4;
    color: var(--grey);
    font-size: 25px;
    line-height: 33px;
    text-align: center;
}

.detail .up {
    margin: 0 5px 4px 14px;
}

.row.tick {
    height: 47px;
    padding-left: 3px;
}

.tick span.din:first-child {
    width: 66px;
    transform-origin: left center;
    white-space: nowrap;
}

/* Comment bar */
.comment {
    display: flex;
    height: 81px;
    padding: 16px 0 0 8px;
}

.input {
    position: relative;
    display: flex;
    width: 450px;
    height: 54px;
    align-items: center;
    border: 2px solid #ebebeb;
    border-radius: 27px;
    background: linear-gradient(90deg, #fff 76px, #f4f4f4 76px);
    color: #999;
    font-size: 24.500px;
}

.dan {
    position: relative;
    width: 76px;
    padding-left: 18px;
    color: #444;
    font-size: 28px;
    font-weight: 700;
}

.dan svg {
    position: absolute;
    left: 37px;
    top: 16px;
}

.input span {
    margin-left: 26px;
    letter-spacing: 0.15px;
}

.input span i,
.vote span i {
    margin-left: 4px;
}

.gift {
    margin-left: 98px;
}

.input .dot {
    position: absolute;
    right: 2px;
    top: -3px;
    width: 12px;
    height: 12px;
}

.vote {
    position: relative;
    width: 276px;
    height: 54px;
    margin-left: 27px;
    font-size: 23px;
    line-height: 54px;
}

.vote span {
    position: absolute;
    top: 0;
}

.bull {
    left: 20px;
    color: #ff352c;
}

.bear {
    left: 154px;
    color: var(--green);
}

/* Footer */
footer {
    height: 153px;
    background: #1a1a1a;
    color: #a8a8a8;
}

.menu {
    display: flex;
    height: 127px;
}

.menu a {
    display: flex;
    width: 156px;
    flex-direction: column;
    align-items: center;
    padding-top: 9px;
    gap: 8.500px;
    font-size: 19px;
}

.menu svg {
    fill: none;
    stroke: #a0a0a0;
    stroke-width: 2;
}

.index {
    width: 144px;
    padding-top: 10px;
    color: #a8a8a8;
}

.index .up {
    display: block;
    width: 0;
    margin-left: 60px;
    border-width: 0 9px 10px;
    border-bottom-color: #b0b0b0;
}

.index strong {
    display: block;
    height: 39px;
    padding: 6px 0 0 18px;
    color: var(--red);
    font-size: 27.500px;
}

.index p {
    display: flex;
    padding-left: 10px;
    font-size: 19px;
    align-items: center;
}

.index p .din {
    margin-left: 21px;
    color: var(--red);
    font-size: 23px;
    transform: scaleX(0.95);
}

.index .din {
    transform-origin: left center;
}

.home {
    width: 274px;
    height: 10px;
    margin-left: 248px;
    border-radius: 5px;
    background: #fff;
}
```
